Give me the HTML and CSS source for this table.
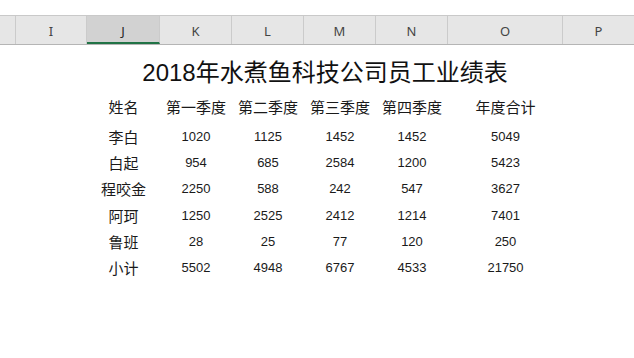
FILE: index.html
```html
<!DOCTYPE html>
<html lang="zh">
<head>
<meta charset="utf-8">
<title>2018年水煮鱼科技公司员工业绩表</title>
<link rel="stylesheet" href="styles.css">
</head>
<body>
<div class="sheet">
  <div class="topgap"></div>
  <div class="colhead">
    <div class="ch edge"></div>
    <div class="ch">I</div>
    <div class="ch sel">J</div>
    <div class="ch">K</div>
    <div class="ch">L</div>
    <div class="ch">M</div>
    <div class="ch">N</div>
    <div class="ch">O</div>
    <div class="ch">P</div>
  </div>
  <div class="grid">
    <div class="title">2018年水煮鱼科技公司员工业绩表</div>

    <div class="c cn head">姓名</div>
    <div class="c cn head">第一季度</div>
    <div class="c cn head">第二季度</div>
    <div class="c cn head">第三季度</div>
    <div class="c cn head">第四季度</div>
    <div class="c cn head">年度合计</div>

    <div class="c cn">李白</div><div class="c">1020</div><div class="c">1125</div><div class="c">1452</div><div class="c">1452</div><div class="c">5049</div>
    <div class="c cn">白起</div><div class="c">954</div><div class="c">685</div><div class="c">2584</div><div class="c">1200</div><div class="c">5423</div>
    <div class="c cn">程咬金</div><div class="c">2250</div><div class="c">588</div><div class="c">242</div><div class="c">547</div><div class="c">3627</div>
    <div class="c cn">阿珂</div><div class="c">1250</div><div class="c">2525</div><div class="c">2412</div><div class="c">1214</div><div class="c">7401</div>
    <div class="c cn">鲁班</div><div class="c">28</div><div class="c">25</div><div class="c">77</div><div class="c">120</div><div class="c">250</div>
    <div class="c cn">小计</div><div class="c">5502</div><div class="c">4948</div><div class="c">6767</div><div class="c">4533</div><div class="c">21750</div>
  </div>
</div>
</body>
</html>
```
FILE: styles.css
```css
html, body {
  margin: 0;
  padding: 0;
  background: #ffffff;
}
.sheet {
  width: 634px;
  height: 358px;
  overflow: hidden;
  font-family: "Liberation Sans", "Noto Sans CJK SC", sans-serif;
}
.topgap {
  height: 16px;
  border-bottom: 1px solid #c9c9c9;
  box-sizing: border-box;
}
.colhead {
  display: grid;
  grid-template-columns: 16px 71px 73px 72px 72px 72px 72px 115px 1fr;
  height: 29px;
  background: #e6e6e6;
  border-bottom: 1px solid #b5b5b5;
  box-sizing: border-box;
}
.ch {
  box-sizing: border-box;
  border-right: 1px solid #cbcbcb;
  display: flex;
  align-items: center;
  justify-content: center;
  padding-top: 2px;
  font-family: "Noto Sans", "Open Sans", sans-serif;
  font-size: 13px;
  color: #444444;
}
.ch.sel {
  background: #d2d2d2;
  border-bottom: 2px solid #217346;
  color: #262626;
  padding-top: 4px;
}
.ch:last-child {
  border-right: none;
}
.grid {
  display: grid;
  grid-template-columns: 73px 72px 72px 72px 72px 115px;
  grid-template-rows: 48px 30px repeat(6, 26.3px);
  margin-left: 87px;
  width: 476px;
  color: #1a1a1a;
}
.title {
  grid-column: 1 / 7;
  line-height: 30px;
  padding-top: 13px;
  box-sizing: border-box;
  text-align: center;
  white-space: nowrap;
  font-family: "Liberation Sans", "Noto Sans CJK SC", sans-serif;
  font-size: 24px;
  color: #111111;
}
.c {
  display: flex;
  align-items: center;
  justify-content: center;
  font-size: 13px;
}
.cn {
  font-family: "Noto Sans CJK SC", sans-serif;
  font-size: 15px;
}
.head {
  height: 26px;
  align-self: start;
}
```
